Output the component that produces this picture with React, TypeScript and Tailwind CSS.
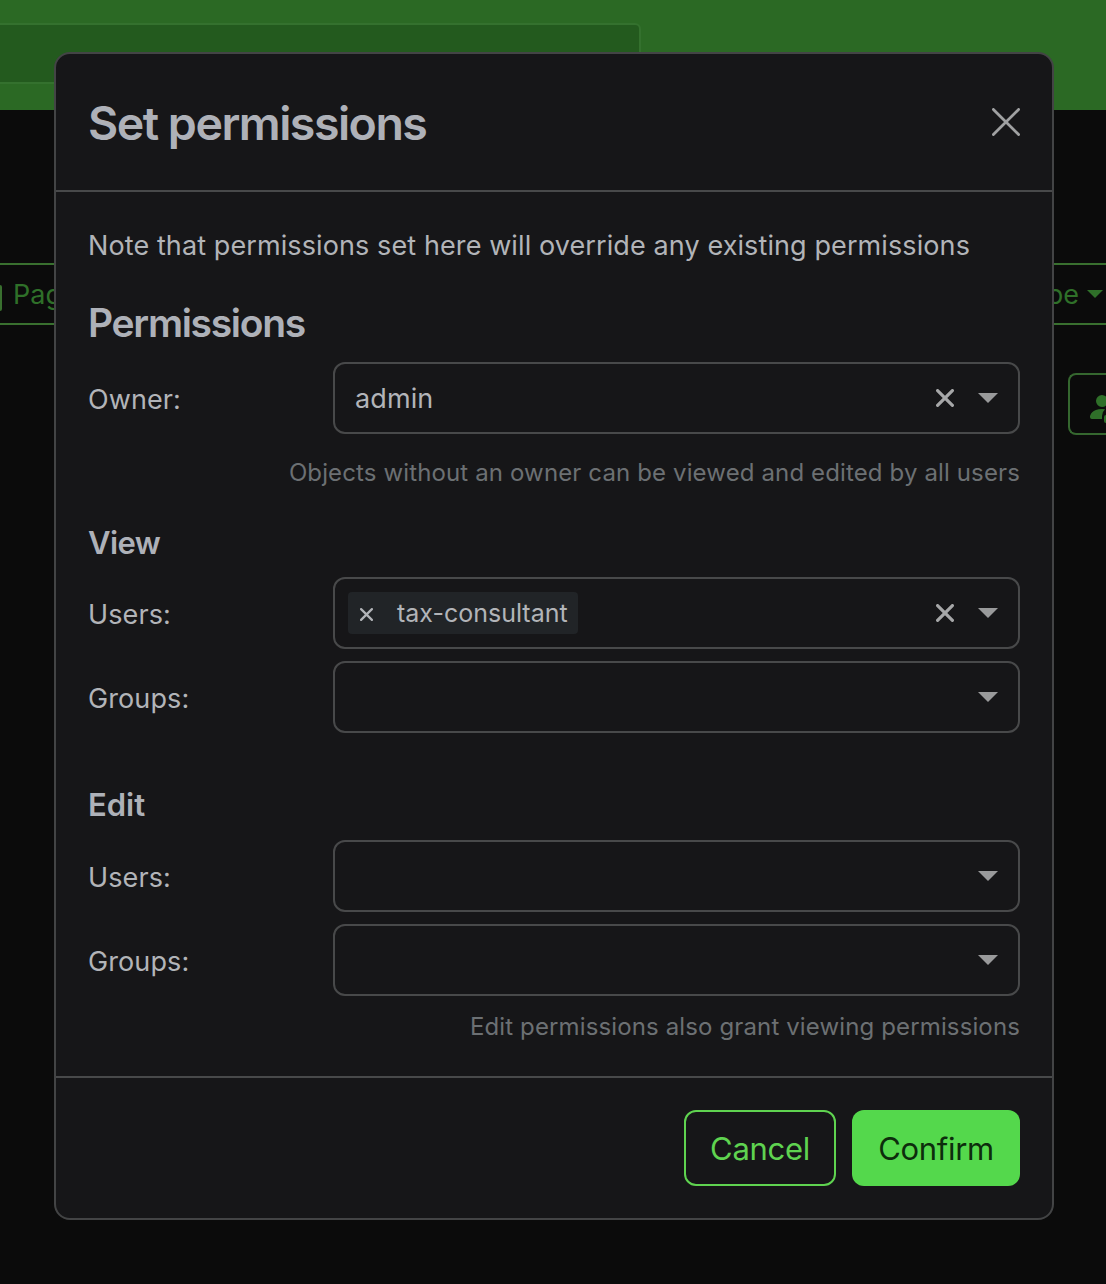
import type { ReactNode } from "react";
import { BsPersonFillLock } from "react-icons/bs";

interface CrossProps {
  size: number;
  stroke: number;
  className?: string;
}

function Cross({ size, stroke, className }: CrossProps) {
  const a = stroke / 2;
  const b = size - stroke / 2;
  return (
    <svg width={size} height={size} viewBox={`0 0 ${size} ${size}`} fill="none" className={className}>
      <path d={`M${a} ${a}L${b} ${b}M${b} ${a}L${a} ${b}`} stroke="currentColor" strokeWidth={stroke} strokeLinecap="round" />
    </svg>
  );
}

function Caret() {
  return (
    <svg width="20" height="10" viewBox="0 0 20 10" className="shrink-0 text-[#999a9b]">
      <path d="M0 0H20L10 10Z" fill="currentColor" />
    </svg>
  );
}

interface SelectRowProps {
  label: string;
  clearable?: boolean;
  children?: ReactNode;
}

function SelectRow({ label, clearable, children }: SelectRowProps) {
  return (
    <div className="flex h-[72px]">
      <label className="w-[245px] shrink-0 pt-[18px] text-[27px] leading-[40px] tracking-[0.1px]">{label}</label>
      <div className="flex flex-1 items-center rounded-[12px] border-2 border-[#48494a] pr-[20px] pl-[13px]">
        <div className="flex flex-1 items-center">{children}</div>
        {clearable && <Cross size={18} stroke={3.2} className="mr-[24px] shrink-0 text-[#a6a7a8]" />}
        <Caret />
      </div>
    </div>
  );
}

function Backdrop() {
  return (
    <div className="h-full text-[#2f7029]">
      {/* Navbar with search field */}
      <div className="h-[110px] bg-[#2b6924] pt-[23px]">
        <div className="h-[61px] w-[641px] rounded-r-[6px] border-y-2 border-r-2 border-[#34712e] bg-[#235a1e]" />
      </div>
      {/* Toolbar */}
      <div className="mt-[153px] flex h-[62px] items-center justify-between border-y-2 border-[#39702f] text-[27px]">
        <div className="flex items-center">
          <div className="mt-[8px] h-[26px] w-[2px] rounded-r-[3px] bg-[#39702f]" />
          <span className="ml-[11px] pt-[2px]">Pag</span>
        </div>
        <div className="flex items-center">
          <span className="pt-[2px]">pe</span>
          <svg width="16" height="8" viewBox="0 0 16 8" className="mr-[3px] ml-[8px]">
            <path d="M0 0H16L8 8Z" fill="currentColor" />
          </svg>
        </div>
      </div>
      <div className="mt-[48px] ml-[1068px] flex h-[62px] items-center overflow-hidden rounded-l-[8px] border-y-2 border-l-2 border-[#35672f] pl-[16px]">
        <BsPersonFillLock size={32} className="mt-[5px] shrink-0" />
      </div>
    </div>
  );
}

export default function App() {
  return (
    <div className="relative h-[1284px] w-[1106px] overflow-hidden bg-[#0b0b0b] font-['Inter',sans-serif] whitespace-nowrap">
      <Backdrop />

      {/* Dialog */}
      <div className="absolute top-[52px] left-[54px] flex h-[1168px] w-[1000px] flex-col rounded-[16px] border-2 border-[#434445] bg-[#161618] text-[#b2b4b8]">
        <header className="flex h-[138px] items-center justify-between border-b-2 border-[#48494a] pr-[32px] pl-[32px]">
          <h4 className="pt-[1px] text-[46.5px] leading-[56px] font-semibold tracking-[-1.5px] text-[#aeb1b8]">Set permissions</h4>
          <Cross size={28} stroke={2.8} className="text-[#a0a1a2]" />
        </header>

        <div className="flex-1 px-[32px] pt-[34px]">
          <p className="text-[27px] leading-[40px] tracking-[0.1px]">Note that permissions set here will override any existing permissions</p>

          <h5 className="mt-[33px] text-[39px] leading-[48px] font-semibold tracking-[-1.3px] text-[#aeb1b8]">Permissions</h5>
          <div className="mt-[15px]">
            <SelectRow label="Owner:" clearable>
              <span className="pt-[2px] pl-[7px] text-[27px] tracking-[0.1px]">admin</span>
            </SelectRow>
          </div>
          <p className="mt-[22px] text-right text-[24px] leading-[34px] tracking-[0.13px] text-[#6c7073]">Objects without an owner can be viewed and edited by all users</p>

          <h6 className="mt-[33px] text-[31px] leading-[40px] font-semibold tracking-[-0.6px] text-[#aeb1b8]">View</h6>
          <div className="mt-[14px] flex flex-col gap-[12px]">
            <SelectRow label="Users:" clearable>
              <div className="flex h-[42px] w-[230px] items-center rounded-[4px] bg-[#212427] pl-[12px]">
                <Cross size={13} stroke={2.2} className="mt-[2px]" />
                <span className="ml-[24px] pt-[2px] text-[25px]">tax-consultant</span>
              </div>
            </SelectRow>
            <SelectRow label="Groups:" />
          </div>

          <h6 className="mt-[52px] text-[31px] leading-[40px] font-semibold text-[#aeb1b8]">Edit</h6>
          <div className="mt-[15px] flex flex-col gap-[12px]">
            <SelectRow label="Users:" />
            <SelectRow label="Groups:" />
          </div>
          <p className="mt-[14px] text-right text-[24px] leading-[34px] tracking-[0.13px] text-[#6c7073]">Edit permissions also grant viewing permissions</p>
        </div>

        <footer className="flex h-[142px] items-start justify-end gap-[16px] border-t-2 border-[#48494a] pt-[32px] pr-[32px] text-[31px] tracking-[-0.3px]">
          <button className="h-[76px] w-[152px] rounded-[12px] border-2 border-[#5fd350] pt-[2px] text-[#5fd350]">Cancel</button>
          <button className="h-[76px] w-[168px] rounded-[12px] bg-[#54d84c] pt-[2px] text-[#0d2d0c]">Confirm</button>
        </footer>
      </div>
    </div>
  );
}
